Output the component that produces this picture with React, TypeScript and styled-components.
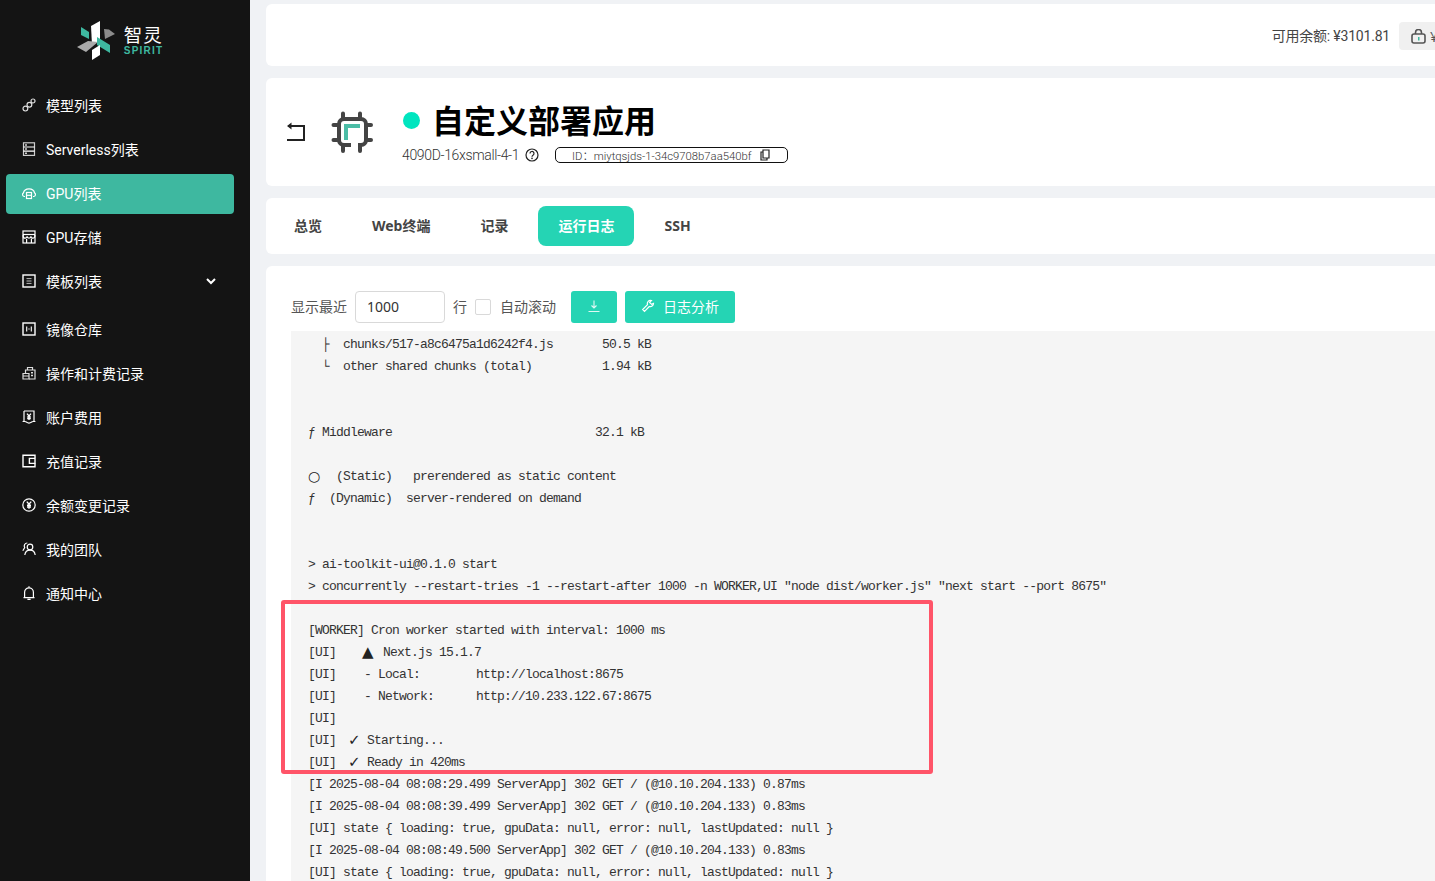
import React from "react";
import styled, { createGlobalStyle } from "styled-components";

const Global = createGlobalStyle`
  html, body { margin: 0; padding: 0; height: 100%; overflow: hidden; }
  body { background: #f0f2f5; font-family: "Noto Sans", "Noto Sans CJK SC", sans-serif; }
  * { box-sizing: border-box; }
`;

const Shell = styled.div`
  display: flex;
  width: 1435px;
  height: 881px;
  overflow: hidden;
`;

const Sidebar = styled.aside`
  flex: 0 0 250px;
  height: 100%;
  background: #141414;
  padding: 0 16px 0 6px;
  color: #fff;
`;

const LogoRow = styled.div`
  height: 80px;
  display: flex;
  align-items: center;
  justify-content: center;
  gap: 8px;
`;

const LogoWords = styled.div`
  display: flex;
  flex-direction: column;
  line-height: 1;
`;

const LogoCn = styled.span`
  font-size: 18.5px;
  letter-spacing: 1px;
  color: #fff;
  line-height: 22px;
`;

const LogoEn = styled.span`
  font-family: "Liberation Sans", sans-serif;
  font-size: 10px;
  font-weight: 700;
  letter-spacing: 1.2px;
  color: #3eb8a0;
  line-height: 10px;
`;

const NavList = styled.nav`
  display: flex;
  flex-direction: column;
  gap: 4px;
  margin-top: 6px;
`;

const NavItem = styled.div<{ $active?: boolean; $after?: boolean }>`
  height: 40px;
  display: flex;
  align-items: center;
  gap: 10px;
  padding: 0 16px 2px;
  border-radius: 4px;
  font-family: Roboto, "Noto Sans CJK SC", sans-serif;
  font-size: 14px;
  color: #fff;
  background: ${(p) => (p.$active ? "#3eb8a0" : "transparent")};
  margin-bottom: ${(p) => (p.$after ? "4px" : "0")};
  svg { flex: 0 0 14px; }
`;

const NavLabel = styled.span`
  flex: 1;
  white-space: nowrap;
`;

const Main = styled.main`
  flex: 0 0 1266px;
  padding: 4px 0 0 16px;
  display: flex;
  flex-direction: column;
  gap: 12px;
`;

const Card = styled.section`
  flex: 0 0 auto;
  background: #fff;
  border-radius: 6px;
`;

const TopBar = styled(Card)`
  height: 62px;
  display: flex;
  align-items: center;
  justify-content: flex-end;
  gap: 9px;
  padding: 2px 16px 0 0;
`;

const Balance = styled.span`
  font-family: Roboto, "Noto Sans CJK SC", sans-serif;
  font-size: 14px;
  letter-spacing: -0.2px;
  color: #444;
  margin-top: -2px;
`;

const WalletButton = styled.div`
  width: 101px;
  height: 28px;
  border-radius: 4px;
  background: #f0f0f0;
  display: flex;
  align-items: center;
  gap: 4px;
  padding-left: 12px;
  font-size: 14px;
  color: #555;
`;

const HeaderCard = styled(Card)`
  height: 108px;
  display: flex;
  align-items: center;
  padding-left: 20px;
`;

const HeaderText = styled.div`
  display: flex;
  flex-direction: column;
  margin-left: 29px;
`;

const TitleRow = styled.div`
  display: flex;
  align-items: center;
  gap: 13px;
  height: 44px;
`;

const StatusDot = styled.span`
  width: 17px;
  height: 17px;
  border-radius: 50%;
  background: #00e5bf;
  margin: -4px 0 0 1px;
`;

const Title = styled.h1`
  margin: -3px 0 0 -1px;
  font-size: 32px;
  font-weight: 700;
  line-height: 44px;
  color: #000;
  white-space: nowrap;
`;

const MetaRow = styled.div`
  display: flex;
  align-items: center;
  height: 18px;
  font-family: Roboto, "Noto Sans CJK SC", sans-serif;
  font-size: 14px;
  color: #333;
  white-space: nowrap;
  margin-top: 2px;
`;

const Spec = styled.span`
  width: 116px;
  font-weight: 300;
  letter-spacing: -0.35px;
`;

const HelpIcon = styled.span`
  display: inline-flex;
  margin: 0 16px 0 7px;
`;

const IdPill = styled.div`
  width: 233px;
  height: 16px;
  border: 1px solid #111;
  border-radius: 5px;
  display: flex;
  align-items: center;
  padding-left: 16px;
  gap: 8px;
  font-size: 11.3px;
  font-weight: 300;
  color: #333;
`;

const IdText = styled.span`
  width: 180px;
  white-space: nowrap;
`;

const TabsCard = styled(Card)`
  height: 56px;
  display: flex;
  align-items: center;
  gap: 10px;
  padding-left: 8px;
`;

const Tab = styled.div<{ $active?: boolean }>`
  height: 40px;
  padding: 0 20px 2px;
  border-radius: 8px;
  display: flex;
  align-items: center;
  font-size: 14px;
  font-weight: 700;
  color: ${(p) => (p.$active ? "#fff" : "#444")};
  background: ${(p) => (p.$active ? "#25d4b4" : "transparent")};
`;

const LogCard = styled(Card)`
  position: relative;
  padding: 25px 0 0 25px;
`;

const Toolbar = styled.div`
  display: flex;
  align-items: center;
  height: 32px;
  font-size: 14px;
  color: #555;
`;

const ToolLabel = styled.span`
  margin-top: -2px;
`;

const LinesInput = styled.div`
  width: 90px;
  height: 32px;
  border: 1px solid #d9d9d9;
  border-radius: 4px;
  display: flex;
  align-items: center;
  padding: 0 0 2px 11px;
  margin: 0 8px;
  color: #333;
`;

const CheckBox = styled.span`
  width: 16px;
  height: 16px;
  border: 1px solid #d9d9d9;
  border-radius: 2px;
  margin: 0 9px 0 8px;
`;

const ActionButton = styled.div<{ $wide?: boolean }>`
  height: 32px;
  width: ${(p) => (p.$wide ? "110px" : "46px")};
  margin-left: ${(p) => (p.$wide ? "8px" : "15px")};
  padding-bottom: 2px;
  border-radius: 3px;
  background: #25d4b4;
  color: #fff;
  display: flex;
  align-items: center;
  justify-content: center;
  gap: 8px;
`;

const LogBox = styled.div`
  margin: 8px 0 0 0;
  padding: 2px 0 0 17px;
  height: 570px;
  background: #f5f5f5;
  font-family: "Liberation Mono", monospace;
  font-size: 13px;
  letter-spacing: -0.8px;
  color: #333;
  overflow: hidden;
`;

const LogLine = styled.div`
  height: 22px;
  line-height: 24px;
  white-space: pre;
`;

const LogGlyph = styled.span<{ $w: number; $size: number; $ml: number }>`
  display: inline-block;
  vertical-align: top;
  width: ${(p) => p.$w}px;
  margin-left: ${(p) => p.$ml}px;
  font-family: "DejaVu Sans", sans-serif;
  font-size: ${(p) => p.$size}px;
  line-height: 22px;
  letter-spacing: 0;
  color: #222;
`;

const Highlight = styled.div`
  position: absolute;
  left: 15px;
  top: 334px;
  width: 652px;
  height: 174px;
  border: 4px solid #ff5468;
  border-radius: 3px;
  pointer-events: none;
`;

const stroke = { fill: "none", stroke: "#fff", strokeWidth: 1.2 } as const;

const icons: Record<string, React.ReactNode> = {
  model: (
    <g {...stroke} stroke="#ddd">
      <circle cx="3.4" cy="10.6" r="2.4" />
      <circle cx="7.4" cy="6.8" r="2.4" />
      <circle cx="11" cy="3" r="2" />
    </g>
  ),
  server: (
    <g {...stroke}>
      <rect x="1.5" y="0.8" width="11" height="12.6" stroke="#ccc" />
      <path d="M1.5 5h11M1.5 9.2h11" />
      <path d="M3.2 3h1.6M3.2 7h1.6M3.2 11.2h1.6" strokeWidth="1.4" />
    </g>
  ),
  cloud: (
    <g {...stroke}>
      <path d="M3 10.5H2.4A1.9 1.9 0 0 1 1.4 7 5.7 5 0 0 1 12.6 7a1.9 1.9 0 0 1-1 3.5H11" />
      <rect x="4.5" y="6.5" width="5" height="6" />
      <path d="M4.5 9.3h5" />
    </g>
  ),
  storage: (
    <g {...stroke}>
      <rect x="1" y="1" width="12" height="12" />
      <path d="M1 4.5h12" />
      <path d="M1.2 5v1.2a1.9 1.9 0 0 0 3.9 0 1.9 1.9 0 0 0 3.8 0 1.9 1.9 0 0 0 3.9 0V5" />
      <path d="M4.6 9v4M9.4 9v4" />
    </g>
  ),
  template: (
    <g {...stroke} strokeWidth="1.4">
      <rect x="1" y="1" width="12" height="12" />
      <path d="M4.5 4.6h5M4.5 7h5M4.5 9.4h5" strokeWidth="1" stroke="#bbb" />
    </g>
  ),
  repo: (
    <g {...stroke} strokeWidth="1.4">
      <rect x="1" y="1" width="12" height="12" />
      <path d="M4.7 4.5v5M9.3 4.5v5" strokeWidth="1.1" />
      <path d="M7 6v2" strokeWidth="1" stroke="#aaa" />
    </g>
  ),
  billing: (
    <g {...stroke} stroke="#ddd">
      <path d="M1 7.5h6V13H1zM1 10h6" />
      <path d="M3.5 7.5V4H13v9H7" />
      <path d="M5.5 4V1.5h5V4" />
      <path d="M9 6.8h2M9 9.5h2" strokeWidth="1.5" />
    </g>
  ),
  account: (
    <g {...stroke}>
      <path d="M2 1h10v10.5M2 1v10.5M0.6 11.5H3c1 0 2 1.6 4 1.6s3-1.6 4-1.6h2.4" />
      <path d="M5 3.6L7 6l2-2.4M7 6v4M5.2 7h3.6M5.2 8.6h3.6" strokeWidth="1.3" />
    </g>
  ),
  recharge: (
    <g {...stroke} strokeWidth="1.4">
      <path d="M13 4V1.2H1v11.6h12V9.6" />
      <path d="M13 4.4H7.4v5H13z" />
    </g>
  ),
  balance: (
    <g {...stroke}>
      <circle cx="7" cy="7" r="6.2" />
      <path d="M4.8 3.6L7 6.2l2.2-2.6M7 6.2v4.6M5 7.2h4M5 9h4" strokeWidth="1.4" />
    </g>
  ),
  team: (
    <g {...stroke}>
      <circle cx="8" cy="5" r="2.8" />
      <path d="M2.8 13c.4-3 2.5-4.8 5.2-4.8s4.8 1.8 5.2 4.8" />
      <path d="M5.3 1a3 3 0 0 0-2.6 4.6L.8 8.8" />
    </g>
  ),
  bell: (
    <g {...stroke}>
      <path d="M7 .2v1.4M2.6 11.4V6.2a4.4 4.4 0 0 1 8.8 0v5.2" />
      <path d="M1.5 11.6h11M5.4 13.4h3.2" />
    </g>
  ),
};

const NavIcon = ({ name }: { name: string }) => (
  <svg width="14" height="14" viewBox="0 0 14 14">
    {icons[name]}
  </svg>
);

const navItems = [
  { icon: "model", label: "模型列表" },
  { icon: "server", label: "Serverless列表" },
  { icon: "cloud", label: "GPU列表", active: true },
  { icon: "storage", label: "GPU存储" },
  { icon: "template", label: "模板列表", caret: true },
  { icon: "repo", label: "镜像仓库" },
  { icon: "billing", label: "操作和计费记录" },
  { icon: "account", label: "账户费用" },
  { icon: "recharge", label: "充值记录" },
  { icon: "balance", label: "余额变更记录" },
  { icon: "team", label: "我的团队" },
  { icon: "bell", label: "通知中心" },
];

const Logo = () => (
  <svg width="39" height="39" viewBox="0 0 39 39">
    <polygon points="14,5 23,0 23,19 15,24" fill="#fff" />
    <polygon points="4,6 12,11 12,18 4,14" fill="#3eb8a0" />
    <polygon points="27,8 32,8.5 38,13 28,18" fill="#8c8c8c" />
    <polygon points="0,26 11,20 21,21 9,31" fill="#a9a9a9" />
    <polygon points="20,16 33,24 33,32 20,24" fill="#3eb8a0" />
    <polygon points="15,29 23,24 23,34 15,39" fill="#fff" />
  </svg>
);

const logText = `  ├  chunks/517-a8c6475a1d6242f4.js       50.5 kB
  └  other shared chunks (total)          1.94 kB


ƒ Middleware                             32.1 kB

○  (Static)   prerendered as static content
ƒ  (Dynamic)  server-rendered on demand


> ai-toolkit-ui@0.1.0 start
> concurrently --restart-tries -1 --restart-after 1000 -n WORKER,UI "node dist/worker.js" "next start --port 8675"

[WORKER] Cron worker started with interval: 1000 ms
[UI]    ▲ Next.js 15.1.7
[UI]    - Local:        http://localhost:8675
[UI]    - Network:      http://10.233.122.67:8675
[UI]
[UI]  ✓ Starting...
[UI]  ✓ Ready in 420ms
[I 2025-08-04 08:08:29.499 ServerApp] 302 GET / (@10.10.204.133) 0.87ms
[I 2025-08-04 08:08:39.499 ServerApp] 302 GET / (@10.10.204.133) 0.83ms
[UI] state { loading: true, gpuData: null, error: null, lastUpdated: null }
[I 2025-08-04 08:08:49.500 ServerApp] 302 GET / (@10.10.204.133) 0.83ms
[UI] state { loading: true, gpuData: null, error: null, lastUpdated: null }`;

const glyphs: Record<string, { w: number; size: number; ml: number }> = {
  "○": { w: 14, size: 14, ml: 0 },
  "▲": { w: 14, size: 15, ml: -2 },
  "✓": { w: 12, size: 15, ml: -2 },
};

const LogContent = () => (
  <>
    {logText.split("\n").map((line, n) => (
      <LogLine key={n}>
        {line.split(/([○▲✓])/).map((part, i) =>
          glyphs[part] ? (
            <LogGlyph key={i} $w={glyphs[part].w} $size={glyphs[part].size} $ml={glyphs[part].ml}>
              {part}
            </LogGlyph>
          ) : (
            <React.Fragment key={i}>{part}</React.Fragment>
          )
        )}
      </LogLine>
    ))}
  </>
);

export default function App() {
  return (
    <Shell>
      <Global />
      <Sidebar>
        <LogoRow>
          <Logo />
          <LogoWords>
            <LogoCn>智灵</LogoCn>
            <LogoEn>SPIRIT</LogoEn>
          </LogoWords>
        </LogoRow>
        <NavList>
          {navItems.map((n) => (
            <NavItem key={n.label} $active={n.active} $after={n.caret}>
              <NavIcon name={n.icon} />
              <NavLabel>{n.label}</NavLabel>
              {n.caret && (
                <svg width="12" height="12" viewBox="0 0 12 12">
                  <path d="M2 4l4 4 4-4" fill="none" stroke="#fff" strokeWidth="2" />
                </svg>
              )}
            </NavItem>
          ))}
        </NavList>
      </Sidebar>
      <Main>
        <TopBar>
          <Balance>可用余额: ¥3101.81</Balance>
          <WalletButton>
            <svg width="15" height="15" viewBox="0 0 15 15">
              <rect x="1" y="5" width="13" height="9" rx="2" fill="none" stroke="#555" strokeWidth="1.6" />
              <path d="M4.5 5V3.5a3 3 0 0 1 6 0V5" fill="none" stroke="#555" strokeWidth="1.6" />
              <rect x="7" y="8" width="1.5" height="3.5" fill="#3eb8a0" />
            </svg>
            ¥3101.81
          </WalletButton>
        </TopBar>
        <HeaderCard>
          <svg width="22" height="22" viewBox="0 0 22 22">
            <path d="M2 5h16v14H1" fill="none" stroke="#222" strokeWidth="2" />
            <path d="M1 5l4.5-3.5v7z" fill="#222" />
          </svg>
          <svg width="42" height="42" viewBox="0 0 42 42" style={{ marginLeft: 23 }}>
            <path d="M20 34h-7a5 5 0 0 1-5-5V13a5 5 0 0 1 5-5h17a5 5 0 0 1 5 5v16a5 5 0 0 1-5 5h-3" fill="none" stroke="#444" strokeWidth="4" />
            <path d="M12 2.5v5M29 2.5v5M12 35v5M29 35v5M2.5 14h5M35 14h5M2.5 29h5M35 29h5" stroke="#444" strokeWidth="4" strokeLinecap="round" />
            <path d="M15 29V15h14" fill="none" stroke="#4bbda6" strokeWidth="4" />
          </svg>
          <HeaderText>
            <TitleRow>
              <StatusDot />
              <Title>自定义部署应用</Title>
            </TitleRow>
            <MetaRow>
              <Spec>4090D-16xsmall-4-1</Spec>
              <HelpIcon>
                <svg width="14" height="14" viewBox="0 0 14 14">
                  <circle cx="7" cy="7" r="6" fill="none" stroke="#222" strokeWidth="1.2" />
                  <path d="M5 5.5a2 2 0 1 1 3 1.7c-.7.4-1 .8-1 1.5" fill="none" stroke="#222" strokeWidth="1.2" />
                  <circle cx="7" cy="10.4" r=".8" fill="#222" />
                </svg>
              </HelpIcon>
              <IdPill>
                <IdText>ID：miytqsjds-1-34c9708b7aa540bf</IdText>
                <svg width="10" height="12" viewBox="0 0 10 12">
                  <path d="M3 1h6v8H3zM3 3H1v8h6V9" fill="#fff" stroke="#222" strokeWidth="1.2" />
                </svg>
              </IdPill>
            </MetaRow>
          </HeaderText>
        </HeaderCard>
        <TabsCard>
          <Tab>总览</Tab>
          <Tab>Web终端</Tab>
          <Tab>记录</Tab>
          <Tab $active>运行日志</Tab>
          <Tab>SSH</Tab>
        </TabsCard>
        <LogCard>
          <Toolbar>
            <ToolLabel>显示最近</ToolLabel>
            <LinesInput>1000</LinesInput>
            <ToolLabel>行</ToolLabel>
            <CheckBox />
            <ToolLabel>自动滚动</ToolLabel>
            <ActionButton>
              <svg width="14" height="14" viewBox="0 0 14 14">
                <path d="M7 1.5v7M4.5 6.5L7 9l2.5-2.5M1.5 12.5h11" fill="none" stroke="#fff" strokeWidth="1.1" opacity=".85" />
              </svg>
            </ActionButton>
            <ActionButton $wide>
              <svg width="14" height="14" viewBox="0 0 14 14">
                <path d="M12.5 4.5a3.2 3.2 0 0 1-4.2 3L3.5 12.3 1.7 10.5l4.8-4.8a3.2 3.2 0 0 1 4-4.2L8.6 3.4l2 2z" fill="none" stroke="#fff" strokeWidth="1.2" />
              </svg>
              日志分析
            </ActionButton>
          </Toolbar>
          <LogBox>
            <LogContent />
          </LogBox>
          <Highlight />
        </LogCard>
      </Main>
    </Shell>
  );
}
